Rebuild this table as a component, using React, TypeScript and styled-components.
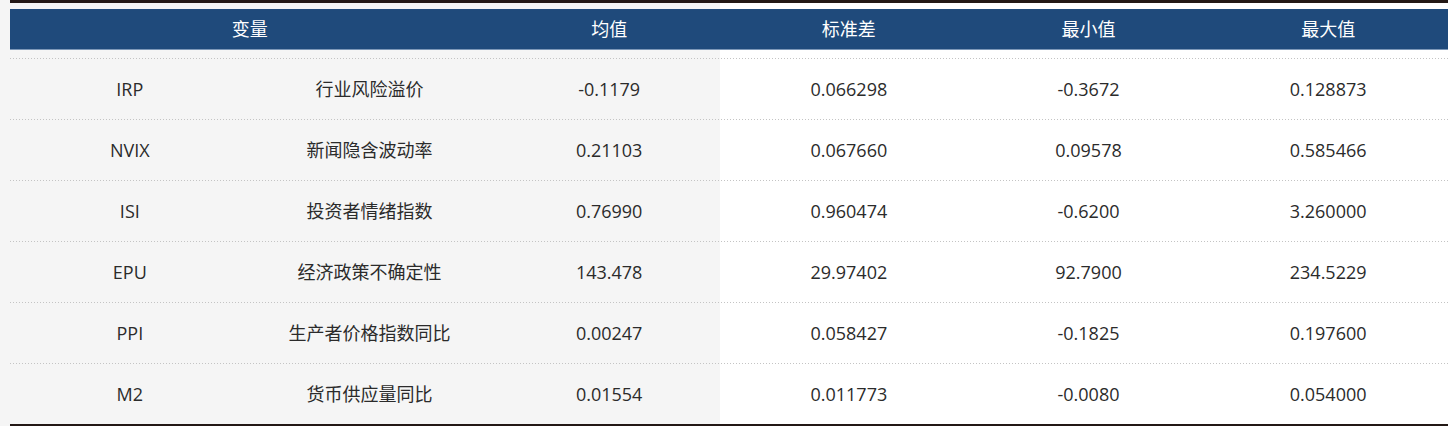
import React from "react";
import styled, { createGlobalStyle } from "styled-components";

const GlobalStyle = createGlobalStyle`
  html, body {
    margin: 0;
    padding: 0;
  }
  body {
    width: 1452px;
    height: 426px;
    overflow: hidden;
    background: linear-gradient(to right, #f5f5f5 0, #f5f5f5 720px, #ffffff 720px, #ffffff 100%);
    font-family: "Open Sans", "Noto Sans CJK SC", sans-serif;
    color: #2b2b2b;
  }
`;

const Table = styled.section`
  width: 1438px;
  margin-left: 10px;
  border-top: 3px solid #231815;
  border-bottom: 3px solid #231815;
  padding-top: 6px;
  box-sizing: border-box;
`;

const HeaderRow = styled.div`
  display: grid;
  grid-template-columns: repeat(6, 1fr);
  height: 41px;
  box-sizing: border-box;
  background: #1f4a7b;
  border-bottom: 1px solid #7d98b8;
  margin-bottom: 8px;
  align-items: center;
`;

const HeadCell = styled.div<{ $span?: number }>`
  grid-column: span ${(p) => p.$span ?? 1};
  text-align: center;
  color: #ffffff;
  font-size: 18px;
  line-height: 1;
`;

const Row = styled.div`
  display: grid;
  grid-template-columns: repeat(6, 1fr);
  height: 61px;
  box-sizing: border-box;
  background-image: linear-gradient(to right, #c4c4c4 1px, transparent 1px);
  background-size: 3px 1px;
  background-repeat: repeat-x;
  background-position: left top;
  padding-top: 1px;
  align-items: center;
`;

const Cell = styled.div`
  text-align: center;
  font-size: 18px;
  line-height: 1;
  color: #2b2b2b;
`;

const rows = [
  ["IRP", "行业风险溢价", "-0.1179", "0.066298", "-0.3672", "0.128873"],
  ["NVIX", "新闻隐含波动率", "0.21103", "0.067660", "0.09578", "0.585466"],
  ["ISI", "投资者情绪指数", "0.76990", "0.960474", "-0.6200", "3.260000"],
  ["EPU", "经济政策不确定性", "143.478", "29.97402", "92.7900", "234.5229"],
  ["PPI", "生产者价格指数同比", "0.00247", "0.058427", "-0.1825", "0.197600"],
  ["M2", "货币供应量同比", "0.01554", "0.011773", "-0.0080", "0.054000"],
];

export default function App() {
  return (
    <>
      <GlobalStyle />
      <Table>
        <HeaderRow>
          <HeadCell $span={2}>变量</HeadCell>
          <HeadCell>均值</HeadCell>
          <HeadCell>标准差</HeadCell>
          <HeadCell>最小值</HeadCell>
          <HeadCell>最大值</HeadCell>
        </HeaderRow>
        {rows.map((r) => (
          <Row key={r[0]}>
            {r.map((c, i) => (
              <Cell key={i}>{c}</Cell>
            ))}
          </Row>
        ))}
      </Table>
    </>
  );
}
